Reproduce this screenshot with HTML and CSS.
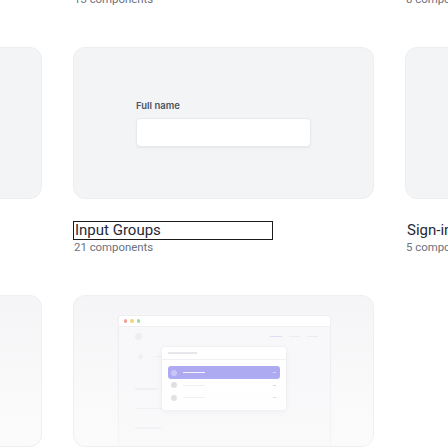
FILE: index.html
```html
<!DOCTYPE html>
<html lang="en">
<head>
<meta charset="utf-8">
<title>Components</title>
<link rel="stylesheet" href="styles.css">
</head>
<body>
<main class="gallery">
  <!-- row 0 -->
  <article class="item">
    <div class="card"></div>
    <h3 class="title">Buttons</h3>
    <p class="sub">17 components</p>
  </article>
  <article class="item">
    <div class="card"></div>
    <h3 class="title">Form Layouts</h3>
    <p class="sub">13 components</p>
  </article>
  <article class="item">
    <div class="card"></div>
    <h3 class="title">Checkboxes</h3>
    <p class="sub">8 components</p>
  </article>

  <!-- row 1 -->
  <article class="item">
    <div class="card"></div>
    <h3 class="title">Select Menus</h3>
    <p class="sub">12 components</p>
  </article>
  <article class="item">
    <div class="card card-center">
      <div class="field">
        <span class="field-label">Full name</span>
        <div class="field-input"></div>
      </div>
    </div>
    <h3 class="title focused">Input Groups</h3>
    <p class="sub">21 components</p>
  </article>
  <article class="item">
    <div class="card"></div>
    <h3 class="title">Sign-in Forms</h3>
    <p class="sub">5 components</p>
  </article>

  <!-- row 2 -->
  <article class="item">
    <div class="card card-soft"></div>
  </article>
  <article class="item">
    <div class="card card-soft card-mock">
      <div class="window">
        <div class="win-bar">
          <span class="dot red"></span>
          <span class="dot yellow"></span>
          <span class="dot green"></span>
        </div>
        <div class="win-body">
          <div class="win-top">
            <span class="avatar"></span>
            <div class="nav">
              <span class="nav-line active"></span>
              <span class="nav-line"></span>
              <span class="nav-line"></span>
            </div>
          </div>
          <div class="ghost-row">
            <span class="ghost-dot"></span>
            <span class="ghost-line w6"></span>
          </div>
          <span class="ghost-line w22 mt28"></span>
          <div class="ghost-row second">
            <span class="ghost-line w40"></span>
            <span class="ghost-line w40"></span>
          </div>
          <span class="ghost-line w26 mt16"></span>

          <div class="panel">
            <div class="panel-head"><span class="head-line"></span></div>
            <div class="panel-list">
              <div class="opt selected">
                <span class="opt-dot"></span>
                <span class="opt-line"></span>
                <span class="opt-dash"></span>
              </div>
              <div class="opt">
                <span class="opt-dot"></span>
                <span class="opt-line"></span>
                <span class="opt-dash"></span>
              </div>
              <div class="opt">
                <span class="opt-dot"></span>
                <span class="opt-line"></span>
                <span class="opt-dash"></span>
              </div>
            </div>
          </div>
        </div>
      </div>
    </div>
  </article>
</main>
</body>
</html>
```

FILE: styles.css
```css
html, body {
  margin: 0;
  padding: 0;
  background: #ffffff;
  overflow: hidden;
}

body {
  font-family: Roboto, "Liberation Sans", Arial, sans-serif;
}

.gallery {
  display: grid;
  grid-template-columns: repeat(3, 301px);
  column-gap: 31px;
  row-gap: 40px;
  margin: -201px 0 0 -259px;
}

.item {
  margin: 0;
  display: flex;
  flex-direction: column;
  align-items: flex-start;
}

.card {
  box-sizing: border-box;
  width: 301px;
  height: 152px;
  margin-bottom: 23px;
  border-radius: 12px;
  background: #f3f4f6;
  border: 1px solid #eceef1;
}

.card-soft {
  background: linear-gradient(180deg, #f5f5f7 0%, #f9f9fa 60%, #fbfbfb 100%);
  border-color: #efeff1;
}

.card-center {
  display: flex;
  align-items: center;
  justify-content: center;
}

.title {
  margin: 0;
  font-size: 15px;
  line-height: 17px;
  font-weight: 400;
  color: #1f2937;
  box-sizing: border-box;
  padding-left: 2px;
}

.title.focused {
  width: 200px;
  margin: -1px 0;
  padding-left: 1px;
  border: 1px solid #1b1b1b;
}

.sub {
  margin: 0;
  font-size: 11.4px;
  line-height: 16px;
  color: #6b7280;
  padding-left: 1px;
}

/* input group preview */
.field {
  display: flex;
  flex-direction: column;
  gap: 6px;
  width: 175px;
}

.field-label {
  font-family: Inter, "Noto Sans", sans-serif;
  font-size: 9.5px;
  line-height: 12px;
  font-weight: 600;
  color: #4b5563;
}

.field-input {
  box-sizing: border-box;
  height: 29px;
  background: #ffffff;
  border: 1px solid #e7e9ed;
  border-radius: 4px;
  box-shadow: 0 1px 2px rgba(16, 24, 40, 0.05);
}

/* select menu mock */
.card-mock {
  position: relative;
  overflow: hidden;
  padding: 19px 0 0 44px;
}

.card-mock::after {
  content: "";
  position: absolute;
  left: 0;
  right: 0;
  bottom: 0;
  height: 70px;
  background: linear-gradient(180deg, rgba(251, 251, 251, 0) 0%, rgba(251, 251, 251, 0.55) 100%);
  pointer-events: none;
}

.window {
  box-sizing: border-box;
  width: 213px;
  height: 150px;
  background: #f8f8fa;
  border: 1px solid #efeff2;
  border-radius: 3px 3px 0 0;
  box-shadow: 0 1px 3px rgba(0, 0, 0, 0.025);
}

.win-bar {
  display: flex;
  align-items: center;
  gap: 3px;
  height: 10px;
  padding-left: 5px;
  background: #ffffff;
  border-bottom: 1px solid #f0f0f3;
  border-radius: 3px 3px 0 0;
}

.dot {
  width: 3.4px;
  height: 3.4px;
  border-radius: 50%;
}
.dot.red { background: #f2a09b; }
.dot.yellow { background: #f4d488; }
.dot.green { background: #a3db9c; }

.win-body {
  position: relative;
  padding: 6px 12px 0 16px;
  display: flex;
  flex-direction: column;
  align-items: flex-start;
}

.win-top {
  display: flex;
  justify-content: space-between;
  align-items: center;
  align-self: stretch;
}

.avatar {
  width: 7px;
  height: 7px;
  border-radius: 50%;
  background: #eeeef1;
}

.nav {
  display: flex;
  gap: 7px;
}

.nav-line {
  width: 11px;
  height: 1.5px;
  background: #ececef;
}
.nav-line.active { background: #dddcf7; width: 12px; }

.ghost-row {
  display: flex;
  align-items: center;
  gap: 12px;
  margin-top: 14px;
  margin-left: 3px;
}

.ghost-row.second {
  margin-left: 0;
  gap: 23px;
  margin-top: 18px;
}

.ghost-dot {
  width: 5px;
  height: 5px;
  border-radius: 50%;
  background: #f0f0f3;
}

.ghost-line {
  display: block;
  height: 1.5px;
  background: #eeeef1;
}
.w6 { width: 6px; }
.w22 { width: 22px; }
.w26 { width: 26px; }
.w40 { width: 40px; }
.mt28 { margin-top: 29px; }
.mt16 { margin-top: 18px; }

.panel {
  position: absolute;
  left: 43px;
  top: 20px;
  width: 124px;
  height: 63px;
  box-sizing: border-box;
  background: #ffffff;
  border-radius: 3px;
  box-shadow: 0 2px 6px rgba(30, 30, 60, 0.06), 0 0 0 1px rgba(0, 0, 0, 0.015);
}

.panel-head {
  height: 12px;
  display: flex;
  align-items: center;
  padding-left: 6px;
  border-bottom: 1px solid #f1f1f4;
}

.head-line {
  width: 29px;
  height: 1.5px;
  background: #e6e7ea;
}

.panel-list {
  display: flex;
  flex-direction: column;
  padding: 6px 6px 0 6px;
}

.opt {
  display: flex;
  align-items: center;
  height: 12.5px;
  padding: 0 4px 0 3px;
  border-radius: 3px;
}

.opt.selected {
  height: 13px;
  background: #aeaaf2;
}

.opt-dot {
  width: 6px;
  height: 6px;
  border-radius: 50%;
  background: #dcdde2;
}

.opt.selected .opt-dot { background: #c9c6f7; }

.opt-line {
  width: 22px;
  height: 1.3px;
  margin-left: 6px;
  background: #eeeff2;
}

.opt.selected .opt-line { background: #f4f3ff; }

.opt-dash {
  width: 3px;
  height: 1.2px;
  margin-left: auto;
  background: #d5d6dc;
}

.opt.selected .opt-dash { background: #d6d4fa; }
```
